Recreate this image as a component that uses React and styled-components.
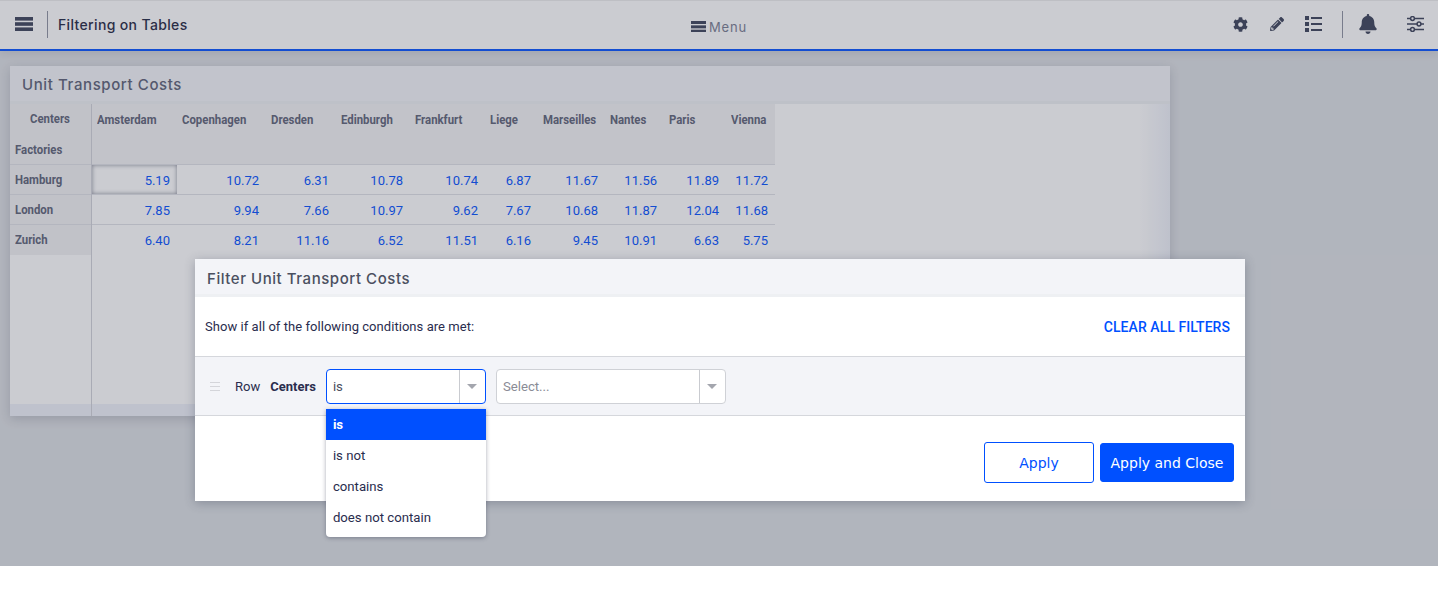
import React from 'react';
import styled, { createGlobalStyle } from 'styled-components';
import { FaCog, FaPencilAlt, FaBell } from 'react-icons/fa';

const GlobalStyle = createGlobalStyle`
    html, body {
        margin: 0;
        padding: 0;
        background: #fff;
        font-family: Roboto, "Liberation Sans", sans-serif;
    }
`

const HEADING_FONT = `Inter, "Open Sans", sans-serif`

const Page = styled.div`
    position: relative;
    height: 566px;
    background: #dcdfe3;
    overflow: hidden;
`

const TopBar = styled.header`
    box-sizing: border-box;
    height: 51px;
    padding-bottom: 2px;
    background: #fff;
    border-top: 1px solid #eee;
    border-bottom: 2px solid #0050ff;
    box-shadow: 0 2px 8px rgba(40, 45, 70, 0.12);
    display: grid;
    grid-template-columns: 1fr auto 1fr;
    align-items: center;
`

const BarLeft = styled.div`
    display: flex;
    align-items: center;
    padding-left: 15px;
    color: #3a4058;
`

const Divider = styled.span`
    width: 1px;
    height: 27px;
    background: #8d90a0;
    margin: ${(p) => p.$margin};
`

const AppTitle = styled.span`
    font-family: ${HEADING_FONT};
    font-size: 14px;
    font-weight: 500;
    letter-spacing: 0.35px;
    color: #1e2440;
`

const MenuLabel = styled.div`
    display: flex;
    align-items: center;
    gap: 3px;
    padding-top: 5px;
    font-family: ${HEADING_FONT};
    font-size: 13px;
    letter-spacing: 0.8px;
    color: #777b90;
`

const MenuBars = styled.span`
    display: flex;
    color: #3a4058;
`

const BarRight = styled.div`
    display: flex;
    align-items: center;
    justify-content: flex-end;
    padding-right: 14px;
    color: #3a4058;
`

const IconSlot = styled.span`
    display: flex;
    margin-left: ${(p) => p.$left || 0}px;
`

const Panel = styled.section`
    position: relative;
    isolation: isolate;
    box-sizing: border-box;
    width: 1160px;
    height: 350px;
    margin: 15px 0 0 10px;
    background: #fff;
    box-shadow: 0 3px 10px rgba(40, 45, 70, 0.2);
    display: flex;
    flex-direction: column;
`

const PanelTitle = styled.h2`
    box-sizing: border-box;
    height: 38px;
    margin: 0;
    padding: 1px 12px 0;
    display: flex;
    align-items: center;
    background: #f3f4f8;
    border-bottom: 3px solid #eef0f3;
    font-family: ${HEADING_FONT};
    font-size: 15px;
    font-weight: 500;
    letter-spacing: 0.6px;
    color: #5a5f75;
`

const PanelBody = styled.div`
    position: relative;
    flex: 1;
    display: flex;
    &::before {
        content: '';
        position: absolute;
        top: 0;
        right: 0;
        bottom: 0;
        width: 30px;
        background: linear-gradient(to right, rgba(238, 241, 249, 0), #eef1f9);
    }
    &::after {
        content: '';
        position: absolute;
        left: 0;
        right: 0;
        bottom: 0;
        height: 12px;
        background: #eff2fa;
    }
`

const SideColumn = styled.div`
    position: relative;
    z-index: 1;
    box-sizing: border-box;
    width: 82px;
    border-right: 1px solid #d0d2d8;
`

const SideHead = styled.div`
    box-sizing: border-box;
    background: #f1f1f3;
    height: ${(p) => p.$height}px;
    line-height: ${(p) => p.$height - 2}px;
    padding: ${(p) => p.$center ? '0 2px 0 0' : '0 0 0 5px'};
    text-align: ${(p) => p.$center ? 'center' : 'left'};
    border-bottom: ${(p) => p.$line ? '1px solid #e0e1e6' : 'none'};
    &:last-child {
        border-bottom: none;
    }
`

const HeadLabel = styled.span`
    display: inline-block;
    font-size: 12.5px;
    font-weight: 700;
    color: #5c6176;
    white-space: nowrap;
    transform: scaleX(0.91);
    transform-origin: ${(p) => p.$center ? 'center' : 'left'};
`

const DataTable = styled.table`
    border-collapse: collapse;
    table-layout: fixed;
    width: 683px;
    align-self: flex-start;
`

const HeadCell = styled.th`
    height: 60px;
    padding: 5px 0 0 5px;
    box-sizing: border-box;
    background: #f3f3f4;
    vertical-align: top;
    text-align: left;
    border-bottom: 1px solid #e0e1e6;
`

const ValueRow = styled.tr`
    &:last-child td {
        border-bottom: none;
    }
`

const ValueCell = styled.td`
    box-sizing: border-box;
    height: 30px;
    padding: 2px 7px 0 0;
    text-align: right;
    font-size: 13px;
    color: #0050ff;
    border-bottom: 1px solid #e0e1e6;
    box-shadow: ${(p) => p.$active ? 'inset 0 0 4px rgba(40, 45, 70, 0.55)' : 'none'};
`

const Overlay = styled.div`
    position: absolute;
    inset: 0;
    background: rgba(69, 73, 91, 0.28);
`

const Modal = styled.div`
    position: absolute;
    left: 195px;
    top: 259px;
    width: 1050px;
    height: 242px;
    background: #fff;
    box-shadow: 0 2px 10px rgba(40, 45, 70, 0.3);
    display: flex;
    flex-direction: column;
`

const ModalTitle = styled.h3`
    box-sizing: border-box;
    height: 38px;
    margin: 0;
    padding: 4px 12px 0;
    display: flex;
    align-items: center;
    background: #f3f4f8;
    border-bottom: 3px solid #eef0f3;
    font-family: ${HEADING_FONT};
    font-size: 15px;
    font-weight: 500;
    letter-spacing: 0.55px;
    color: #4a4f60;
`

const ConditionBar = styled.div`
    height: 59px;
    padding: 0 15px 0 10px;
    display: flex;
    align-items: center;
    justify-content: space-between;
    font-size: 13px;
    letter-spacing: 0.05px;
    color: #2a2d4e;
`

const ClearLink = styled.a`
    font-size: 14px;
    font-weight: 500;
    color: #0050ff;
`

const FilterRow = styled.div`
    box-sizing: border-box;
    height: 60px;
    padding-left: 15px;
    display: flex;
    align-items: center;
    background: #f3f4f8;
    border-top: 1px solid #d5d7dc;
    border-bottom: 1px solid #d5d7dc;
    font-size: 13px;
    color: #2a2d4e;
`

const DragHandle = styled.span`
    position: relative;
    width: 10px;
    height: 7px;
    margin-right: 15px;
    border-top: 1px solid #d4d5da;
    border-bottom: 1px solid #d4d5da;
    &::after {
        content: '';
        position: absolute;
        left: 0;
        right: 0;
        top: 3px;
        height: 1px;
        background: #d4d5da;
    }
`

const FieldName = styled.b`
    font-weight: 700;
    margin: 0 10px;
`

const SelectWrap = styled.div`
    position: relative;
    width: ${(p) => p.$width}px;
    margin-right: 10px;
`

const SelectBox = styled.div`
    box-sizing: border-box;
    height: 35px;
    display: flex;
    background: #fff;
    border: 1px solid ${(p) => p.$open ? '#0050ff' : '#cfd1d6'};
    border-radius: 4px;
`

const SelectValue = styled.span`
    flex: 1;
    padding-left: 6px;
    line-height: 33px;
    font-size: 13.2px;
    color: ${(p) => p.$muted ? '#8a8c96' : '#4a4d60'};
`

const Caret = styled.span`
    width: 25px;
    border-left: 1px solid #c9cbd0;
    display: flex;
    align-items: center;
    justify-content: center;
    &::after {
        content: '';
        border-left: 5px solid transparent;
        border-right: 5px solid transparent;
        border-top: 5px solid #a4a6ae;
    }
`

const Menu = styled.ul`
    position: absolute;
    left: 0;
    right: 0;
    top: 40px;
    z-index: 2;
    margin: 0;
    padding: 0 0 4px;
    list-style: none;
    background: #fff;
    border-radius: 0 0 4px 4px;
    box-shadow: 0 1px 4px rgba(40, 45, 70, 0.4);
`

const MenuItem = styled.li`
    height: 31px;
    line-height: 31px;
    padding-left: 7px;
    font-size: 13.2px;
    font-weight: ${(p) => p.$active ? 700 : 400};
    color: ${(p) => p.$active ? '#fff' : '#2a2d4e'};
    background: ${(p) => p.$active ? '#0050ff' : 'transparent'};
`

const ModalFooter = styled.div`
    flex: 1;
    display: flex;
    justify-content: flex-end;
    align-items: center;
    gap: 6px;
    padding: 8px 11px 0 0;
`

const Button = styled.button`
    box-sizing: border-box;
    width: ${(p) => p.$width}px;
    height: ${(p) => p.$height}px;
    padding: 0;
    border: 1px solid #0050ff;
    border-radius: 3px;
    background: ${(p) => p.$primary ? '#0050ff' : '#fff'};
    color: ${(p) => p.$primary ? '#fff' : '#0050ff'};
    font-family: "DejaVu Sans", sans-serif;
    font-size: 14px;
`

const BarsIcon = ({ size }) => (
    <svg width={size} height={size * 0.78} viewBox="0 0 18 14" fill="currentColor">
        <rect x="0" y="0" width="18" height="3.6" />
        <rect x="0" y="5.2" width="18" height="3.6" />
        <rect x="0" y="10.4" width="18" height="3.6" />
    </svg>
)

const ListIcon = () => (
    <svg width="17" height="16" viewBox="0 0 17 16" fill="currentColor">
        <rect x="0" y="0" width="4" height="4" />
        <rect x="0" y="6" width="4" height="4" />
        <rect x="0" y="12" width="4" height="4" />
        <rect x="6" y="1" width="11" height="2" />
        <rect x="6" y="7" width="11" height="2" />
        <rect x="6" y="13" width="11" height="2" />
    </svg>
)

const SlidersIcon = () => (
    <svg width="17" height="16" viewBox="0 0 17 16" fill="none" stroke="currentColor" strokeWidth="1.5">
        <path d="M0 2.5h17M0 8h17M0 13.5h17" />
        <circle cx="5.5" cy="2.5" r="1.9" fill="#fff" />
        <circle cx="12" cy="8" r="1.9" fill="#fff" />
        <circle cx="5.5" cy="13.5" r="1.9" fill="#fff" />
    </svg>
)

const columns = [
    { name: 'Amsterdam', width: 85 },
    { name: 'Copenhagen', width: 89 },
    { name: 'Dresden', width: 70 },
    { name: 'Edinburgh', width: 74 },
    { name: 'Frankfurt', width: 75 },
    { name: 'Liege', width: 53 },
    { name: 'Marseilles', width: 67 },
    { name: 'Nantes', width: 59 },
    { name: 'Paris', width: 62 },
    { name: 'Vienna', width: 49 },
]

const rows = [
    { name: 'Hamburg', values: ['5.19', '10.72', '6.31', '10.78', '10.74', '6.87', '11.67', '11.56', '11.89', '11.72'] },
    { name: 'London', values: ['7.85', '9.94', '7.66', '10.97', '9.62', '7.67', '10.68', '11.87', '12.04', '11.68'] },
    { name: 'Zurich', values: ['6.40', '8.21', '11.16', '6.52', '11.51', '6.16', '9.45', '10.91', '6.63', '5.75'] },
]

const operators = ['is', 'is not', 'contains', 'does not contain']

const App = () => (
    <Page>
        <GlobalStyle />
        <TopBar>
            <BarLeft>
                <BarsIcon size={18} />
                <Divider $margin="0 10px 0 14px" />
                <AppTitle>Filtering on Tables</AppTitle>
            </BarLeft>
            <MenuLabel>
                <MenuBars><BarsIcon size={15} /></MenuBars>
                Menu
            </MenuLabel>
            <BarRight>
                <IconSlot><FaCog size={15} /></IconSlot>
                <IconSlot $left={22}><FaPencilAlt size={14} /></IconSlot>
                <IconSlot $left={21}><ListIcon /></IconSlot>
                <Divider $margin="0 15px 0 20px" />
                <IconSlot><FaBell size={20} /></IconSlot>
                <IconSlot $left={29}><SlidersIcon /></IconSlot>
            </BarRight>
        </TopBar>

        <Panel>
            <PanelTitle>Unit Transport Costs</PanelTitle>
            <PanelBody>
                <SideColumn>
                    <SideHead $height={30} $center><HeadLabel $center>Centers</HeadLabel></SideHead>
                    <SideHead $height={31} $line><HeadLabel>Factories</HeadLabel></SideHead>
                    {rows.map((row) => (
                        <SideHead key={row.name} $height={30} $line><HeadLabel>{row.name}</HeadLabel></SideHead>
                    ))}
                </SideColumn>
                <DataTable>
                    <colgroup>
                        {columns.map((col) => (
                            <col key={col.name} style={{ width: col.width }} />
                        ))}
                    </colgroup>
                    <thead>
                        <tr>
                            {columns.map((col) => (
                                <HeadCell key={col.name}><HeadLabel>{col.name}</HeadLabel></HeadCell>
                            ))}
                        </tr>
                    </thead>
                    <tbody>
                        {rows.map((row, r) => (
                            <ValueRow key={row.name}>
                                {row.values.map((value, c) => (
                                    <ValueCell key={c} $active={r === 0 && c === 0}>{value}</ValueCell>
                                ))}
                            </ValueRow>
                        ))}
                    </tbody>
                </DataTable>
            </PanelBody>
        </Panel>

        <Overlay />

        <Modal>
            <ModalTitle>Filter Unit Transport Costs</ModalTitle>
            <ConditionBar>
                Show if all of the following conditions are met:
                <ClearLink>CLEAR ALL FILTERS</ClearLink>
            </ConditionBar>
            <FilterRow>
                <DragHandle />
                Row
                <FieldName>Centers</FieldName>
                <SelectWrap $width={160}>
                    <SelectBox $open>
                        <SelectValue>is</SelectValue>
                        <Caret />
                    </SelectBox>
                    <Menu>
                        {operators.map((op, i) => (
                            <MenuItem key={op} $active={i === 0}>{op}</MenuItem>
                        ))}
                    </Menu>
                </SelectWrap>
                <SelectWrap $width={230}>
                    <SelectBox>
                        <SelectValue $muted>Select...</SelectValue>
                        <Caret />
                    </SelectBox>
                </SelectWrap>
            </FilterRow>
            <ModalFooter>
                <Button $width={110} $height={41}>Apply</Button>
                <Button $width={134} $height={39} $primary>Apply and Close</Button>
            </ModalFooter>
        </Modal>
    </Page>
);

export default App;
